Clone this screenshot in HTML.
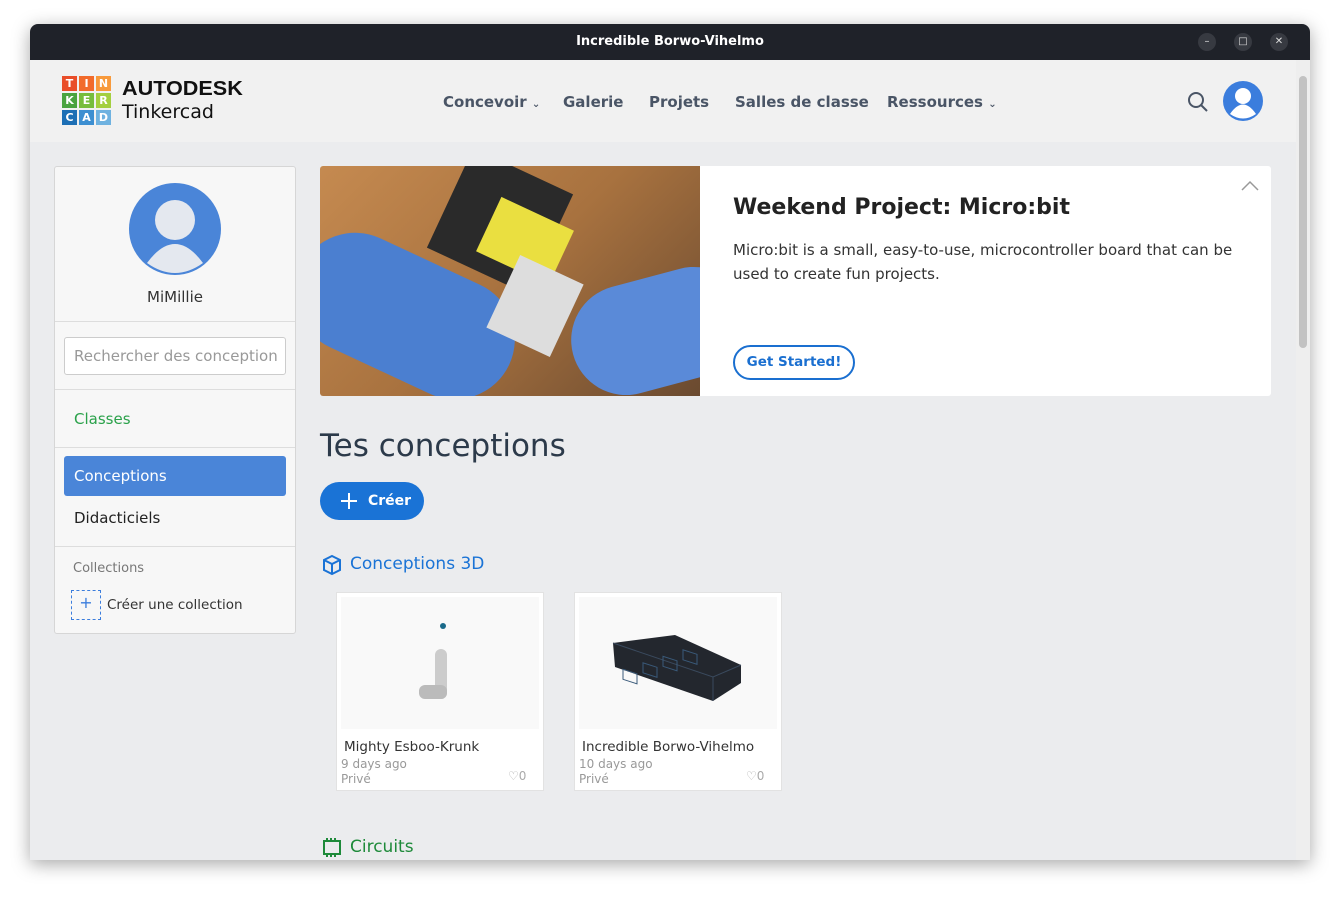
<!DOCTYPE html>
<html><head><style>
*{box-sizing:border-box;margin:0;padding:0}
body{width:1340px;height:899px;background:#fff;font-family:"DejaVu Sans","Liberation Sans",sans-serif;position:relative;overflow:hidden}
.win{position:absolute;left:30px;top:24px;width:1280px;height:836px;background:#ebecee;border-radius:8px 8px 0 0;overflow:hidden;box-shadow:0 4px 18px rgba(0,0,0,.35)}
.tb{height:36px;background:#1f2229;color:#fff;text-align:center;font-size:13px;line-height:36px;font-weight:bold;position:relative}
.tb .b{position:absolute;top:9px;width:18px;height:18px;border-radius:50%;background:#373a41;color:#ddd;font-size:10px;line-height:18px;text-align:center;font-weight:normal}
.hd{position:absolute;top:36px;left:0;width:1266px;height:82px;background:#f1f1f1}
.nav{position:absolute;top:33px;font-size:15px;color:#4a5566;font-weight:bold;white-space:nowrap}
.nav small{font-size:10px}
.sb{position:absolute;right:0;top:36px;width:14px;height:800px;background:#eee}
.sb div{position:absolute;left:3px;top:16px;width:8px;height:272px;background:#c2c2c2;border-radius:4px}
.side{position:absolute;left:24px;top:142px;width:242px;height:468px;background:#f7f7f7;border:1px solid #d6d6d6;border-radius:3px}
.hr{position:absolute;left:0;width:240px;height:1px;background:#ddd}
.t{position:absolute;white-space:nowrap}
.card{position:absolute;top:568px;width:208px;height:199px;background:#fff;border:1px solid #e2e2e2}
.card .im{position:absolute;left:4px;top:4px;width:198px;height:132px;background:#f9f9f9}
</style></head><body>
<div class="win">
 <div class="tb">Incredible Borwo-Vihelmo
  <div class="b" style="left:1168px">–</div><div class="b" style="left:1204px">□</div><div class="b" style="left:1240px">✕</div></div>
 <div class="hd">
  <div style="position:absolute;left:32px;top:16px;display:grid;grid-template-columns:repeat(3,15px);gap:2px;font-size:11px;font-weight:bold;color:#fff;text-align:center;line-height:15px">
   <span style="background:#e94e2a">T</span><span style="background:#f26b2b">I</span><span style="background:#f89a3c">N</span>
   <span style="background:#4aa33f">K</span><span style="background:#77bd3c">E</span><span style="background:#a4cf3f">R</span>
   <span style="background:#1d6fb5">C</span><span style="background:#3d8fd1">A</span><span style="background:#6fb2e0">D</span></div>
  <div class="t" style="left:92px;top:18px;font-size:20px;font-weight:900;color:#111;font-family:'Liberation Sans',sans-serif;transform:scaleX(1.08);transform-origin:left">AUTODESK</div>
  <div class="t" style="left:92px;top:41px;font-size:19px;color:#111">Tinkercad</div>
  <div class="nav" style="left:413px">Concevoir <small>⌄</small></div>
  <div class="nav" style="left:533px">Galerie</div>
  <div class="nav" style="left:619px">Projets</div>
  <div class="nav" style="left:705px">Salles de classe</div>
  <div class="nav" style="left:857px">Ressources <small>⌄</small></div>
  <svg style="position:absolute;left:1157px;top:31px" width="22" height="22"><circle cx="9" cy="9" r="7" fill="none" stroke="#4a5566" stroke-width="2"/><line x1="14" y1="14" x2="20" y2="20" stroke="#4a5566" stroke-width="2"/></svg>
  <svg style="position:absolute;left:1193px;top:21px" width="40" height="40"><circle cx="20" cy="20" r="20" fill="#3b7ddd"/><circle cx="20" cy="15" r="8" fill="#fff"/><path d="M7 33 Q20 14 33 33 Q20 42 7 33Z" fill="#fff"/></svg>
 </div>
 <div class="sb"><div></div></div>
 <div class="side">
  <svg style="position:absolute;left:74px;top:16px" width="92" height="92"><circle cx="46" cy="46" r="46" fill="#4a85d8"/><circle cx="46" cy="37" r="20" fill="#e4e8ef"/><path d="M18 80 Q46 42 74 80 Q46 100 18 80Z" fill="#e4e8ef"/></svg>
  <div class="t" style="left:0;width:240px;text-align:center;top:121px;font-size:15px;color:#333">MiMillie</div>
  <div class="hr" style="top:154px"></div>
  <div style="position:absolute;left:9px;top:170px;width:222px;height:38px;border:1px solid #ccc;background:#fff;border-radius:3px;font-size:15px;color:#999;padding:9px 9px;white-space:nowrap;overflow:hidden">Rechercher des conception</div>
  <div class="hr" style="top:222px"></div>
  <div class="t" style="left:19px;top:243px;font-size:15px;color:#2aa14a">Classes</div>
  <div class="hr" style="top:280px"></div>
  <div style="position:absolute;left:9px;top:289px;width:222px;height:40px;background:#4a85d8;border-radius:3px;color:#fff;font-size:15px;padding:11px 10px">Conceptions</div>
  <div class="t" style="left:19px;top:342px;font-size:15px;color:#222">Didacticiels</div>
  <div class="hr" style="top:379px"></div>
  <div class="t" style="left:18px;top:394px;font-size:13px;color:#777">Collections</div>
  <div style="position:absolute;left:16px;top:423px;width:30px;height:30px;border:1px dashed #3b7ddd;color:#3b7ddd;text-align:center;font-size:16px;line-height:24px">+</div>
  <div class="t" style="left:52px;top:430px;font-size:13.5px;color:#333">Créer une collection</div>
 </div>
 <div style="position:absolute;left:290px;top:142px;width:951px;height:230px;background:#fff;border-radius:3px;overflow:hidden">
  <div style="position:absolute;left:0;top:0;width:380px;height:230px;overflow:hidden;background:linear-gradient(135deg,#c58a50,#a8723f 50%,#6a4a30)">
   <div style="position:absolute;left:-30px;top:90px;width:230px;height:120px;background:#4b7fd0;border-radius:60px;transform:rotate(25deg)"></div>
   <div style="position:absolute;left:250px;top:110px;width:180px;height:110px;background:#5a8ad8;border-radius:55px;transform:rotate(-15deg)"></div>
   <div style="position:absolute;left:125px;top:0;width:110px;height:110px;background:#2a2a2a;transform:rotate(25deg)"></div>
   <div style="position:absolute;left:165px;top:45px;width:80px;height:60px;background:#eadf40;transform:rotate(25deg)"></div>
   <div style="position:absolute;left:180px;top:100px;width:70px;height:80px;background:#ddd;transform:rotate(25deg)"></div>
  </div>
  <div class="t" style="left:413px;top:29px;font-size:22px;font-weight:bold;color:#222">Weekend Project: Micro:bit</div>
  <div style="position:absolute;left:413px;top:72px;width:520px;font-size:15px;line-height:24px;color:#333">Micro:bit is a small, easy-to-use, microcontroller board that can be used to create fun projects.</div>
  <div style="position:absolute;left:413px;top:179px;width:122px;height:35px;border:2px solid #1a6fd0;border-radius:18px;color:#1a6fd0;font-size:13.5px;font-weight:bold;text-align:center;line-height:31px">Get Started!</div>
  <svg style="position:absolute;left:921px;top:14px" width="18" height="12"><path d="M1 10 L9 2 L17 10" fill="none" stroke="#999" stroke-width="1.5"/></svg>
 </div>
 <div class="t" style="left:290px;top:404px;font-size:31px;color:#2c3a4a">Tes conceptions</div>
 <div style="position:absolute;left:290px;top:458px;width:104px;height:38px;background:#1a73d6;border-radius:19px;color:#fff;font-size:14px;font-weight:bold;line-height:38px;padding-left:48px">Créer<svg style="position:absolute;left:20px;top:10px" width="18" height="18"><path d="M9 1v16M1 9h16" stroke="#fff" stroke-width="2"/></svg></div>
 <svg style="position:absolute;left:291px;top:530px" width="22" height="22"><path d="M11 2 L19 6 L19 16 L11 20 L3 16 L3 6Z M3 6 L11 10 L19 6 M11 10 L11 20" fill="none" stroke="#1a73d6" stroke-width="2"/></svg>
 <div class="t" style="left:320px;top:530px;font-size:17px;color:#1a73d6">Conceptions 3D</div>
 <div class="card" style="left:306px"><div class="im">
  <div style="position:absolute;left:99px;top:26px;width:6px;height:6px;border-radius:50%;background:#1a6a8a"></div>
  <div style="position:absolute;left:94px;top:52px;width:12px;height:50px;background:#ccc;border-radius:6px"></div>
  <div style="position:absolute;left:78px;top:88px;width:28px;height:14px;background:#bbb;border-radius:6px"></div></div>
  <div class="t" style="left:7px;top:146px;font-size:13.5px;color:#333">Mighty Esboo-Krunk</div>
  <div class="t" style="left:4px;top:164px;font-size:12px;color:#999">9 days ago</div>
  <div class="t" style="left:4px;top:179px;font-size:12px;color:#999">Privé</div>
  <div class="t" style="left:171px;top:176px;font-size:12px;color:#aaa">♡0</div></div>
 <div class="card" style="left:544px"><div class="im">
  <svg width="198" height="132"><path d="M34 46 L96 38 L162 68 L162 86 L134 104 L36 70Z" fill="#23272e"/><path d="M34 46 L134 80 L162 68 M134 80 L134 104" stroke="#3a4a5e" fill="none"/><g fill="none" stroke="#3a5a7a"><rect x="44" y="58" width="14" height="10" transform="skewY(18)"/><rect x="64" y="45" width="14" height="10" transform="skewY(18)"/><rect x="84" y="32" width="14" height="10" transform="skewY(18)"/><rect x="104" y="19" width="14" height="10" transform="skewY(18)"/></g></svg></div>
  <div class="t" style="left:7px;top:146px;font-size:13.5px;color:#333">Incredible Borwo-Vihelmo</div>
  <div class="t" style="left:4px;top:164px;font-size:12px;color:#999">10 days ago</div>
  <div class="t" style="left:4px;top:179px;font-size:12px;color:#999">Privé</div>
  <div class="t" style="left:171px;top:176px;font-size:12px;color:#aaa">♡0</div></div>
 <svg style="position:absolute;left:291px;top:813px" width="22" height="22"><rect x="3" y="4" width="16" height="13" fill="none" stroke="#1e8a3a" stroke-width="2"/><path d="M6 1v3M10 1v3M14 1v3M6 17v3M10 17v3M14 17v3" stroke="#1e8a3a" stroke-width="2"/></svg>
 <div class="t" style="left:320px;top:813px;font-size:17px;color:#1e8a3a">Circuits</div>
</div>
</body></html>
